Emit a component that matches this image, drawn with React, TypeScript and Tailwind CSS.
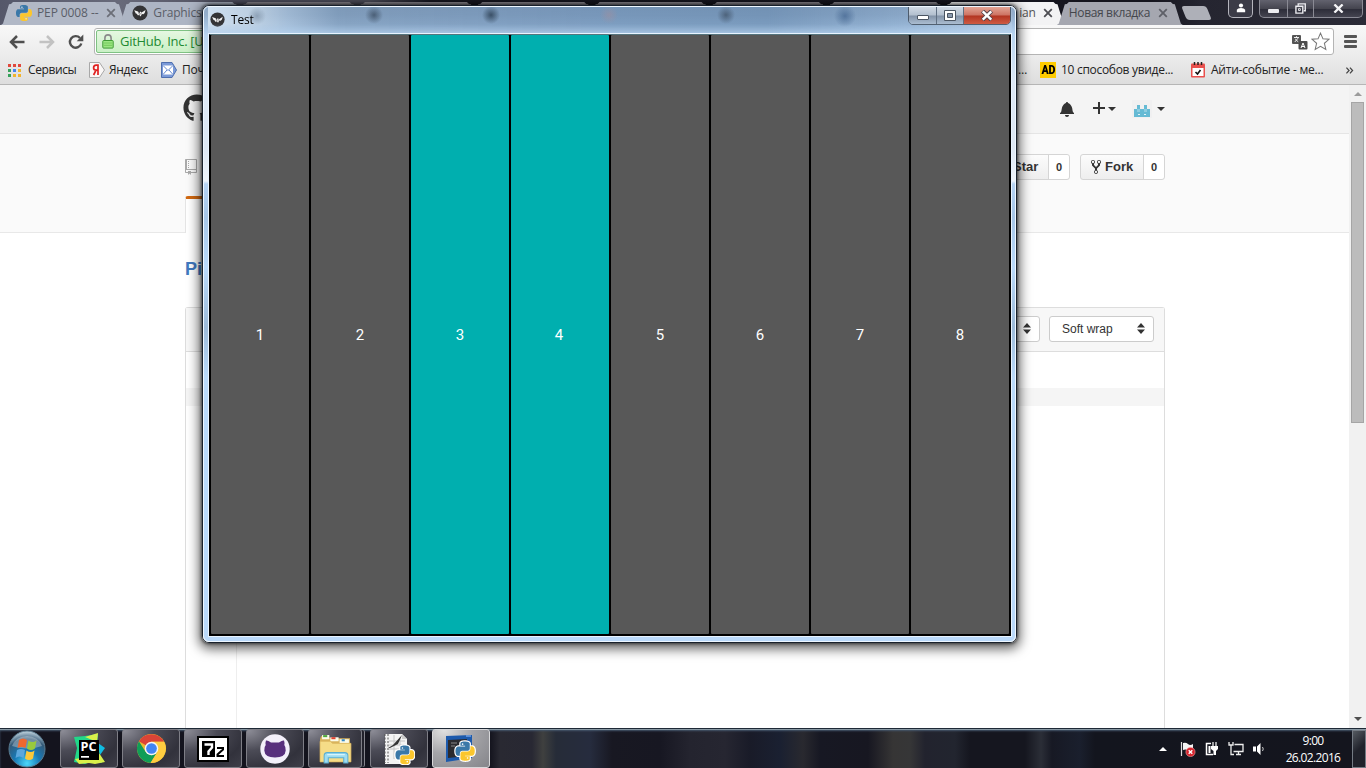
import type { ReactNode } from "react";
import { FaGithub } from "react-icons/fa";

const SNAKE =
  "M14.25.18l.9.2.73.26.59.3.45.32.34.34.25.34.16.33.1.3.04.26.02.2-.01.13V8.5l-.05.63-.13.55-.21.46-.26.38-.3.31-.33.25-.35.19-.35.14-.33.1-.3.07-.26.04-.21.02H8.77l-.69.05-.59.14-.5.22-.41.27-.33.32-.27.35-.2.36-.15.37-.1.35-.07.32-.04.27-.02.21v3.06H3.17l-.21-.03-.28-.07-.32-.12-.35-.18-.36-.26-.36-.36-.35-.46-.32-.59-.28-.73-.21-.88-.14-1.05-.05-1.23.06-1.22.16-1.04.24-.87.32-.71.36-.57.4-.44.42-.33.42-.24.4-.16.36-.1.32-.05.24-.01h.16l.06.01h8.16v-.83H6.18l-.01-2.75-.02-.37.05-.34.11-.31.17-.28.25-.26.31-.23.38-.2.44-.18.51-.15.58-.12.64-.1.71-.06.77-.04.84-.02 1.27.05z";

function PythonShape({ outline = false }: { outline?: boolean }) {
  return (
    <>
      {outline && (
        <g fill="white" stroke="white" strokeWidth="3" strokeLinejoin="round">
          <path d={SNAKE} />
          <path d={SNAKE} transform="rotate(180 12 12)" />
        </g>
      )}
      <path d={SNAKE} fill="#3a78a8" />
      <path d={SNAKE} fill="#fbc62d" transform="rotate(180 12 12)" />
      <circle cx="8.9" cy="3.3" r="1" fill="white" />
      <circle cx="15.1" cy="20.7" r="1" fill="white" />
    </>
  );
}

function KivyIcon({ className }: { className: string }) {
  return (
    <svg viewBox="0 0 16 16" className={className}>
      <circle cx="8" cy="8" r="7.6" fill="#343436" />
      <path d="M2.2 5.2 6 6.6 7.4 8.6 8.2 6.4 9.6 7.6 13.6 5 12.7 8 11.4 9.2 9.9 9 8.6 11.4 7.2 9.8 6 10.6 4.8 8.8 3.8 8.4z" fill="#f4f4f4" />
      <path d="M6.6 7.6 7.5 9.8M9.4 7.6 8.4 9.4" stroke="#555" strokeWidth=".6" />
    </svg>
  );
}

function Cross({ className }: { className: string }) {
  return (
    <svg viewBox="0 0 10 10" className={className} fill="none" stroke="currentColor" strokeWidth="1.8">
      <path d="M1.2 1.2l7.6 7.6M8.8 1.2 1.2 8.8" />
    </svg>
  );
}

const TAB =
  "flex h-[24px] w-[126px] shrink-0 -mr-[8.7px] items-center [clip-path:polygon(0_100%,2px_94%,8px_14%,10px_3px,12px_1px,114px_1px,116px_3px,118px_14%,124px_94%,126px_100%)]";

function TabStrip() {
  return (
    <div className="flex h-[25px] items-end bg-[linear-gradient(90deg,#55586a_0px,#686a7a_120px,#4b4c5b_240px,#4b4b57_370px,#16161f_430px,#15151e_1150px,#252530_1200px,#2b2b37_1366px)] pl-[1px]">
      <div className={`${TAB} bg-[#b1b8c6] text-[#5a5e68]`}>
        <svg viewBox="0 0 24 24" className="ml-[15px] size-4"><PythonShape /></svg>
        <span className="ml-[5px] w-[67px] whitespace-nowrap text-[12px] tracking-[-0.1px]">PEP 0008 --</span>
        <Cross className="ml-[2px] size-[10px] text-[#6c6f78]" />
      </div>
      <div className={`${TAB} bg-[#adb5c4] text-[#5a5e68]`}>
        <KivyIcon className="ml-[14px] size-4" />
        <span className="ml-[5px] whitespace-nowrap text-[12px] tracking-[-0.15px]">Graphics</span>
      </div>
      {[0, 1, 2, 3, 4, 5].map((i) => (
        <div key={i} className={`${TAB} bg-[#8b8890]`} />
      ))}
      <div className={`${TAB} bg-[#f3f3f4] text-[#555]`}>
        <span className="ml-[76px] w-[20px] text-right text-[12px] tracking-[-0.3px]">ian</span>
        <Cross className="ml-[7px] size-[10px] text-[#4d4d52]" />
      </div>
      <div className={`${TAB} bg-[#a5a7b0] text-[#44464c]`}>
        <span className="ml-[12px] w-[82px] whitespace-nowrap text-[12px] tracking-[-0.35px]">Новая вкладка</span>
        <Cross className="ml-[7px] size-[10px] text-[#5e6068]" />
      </div>
      <div className="mb-[5px] ml-[10px] h-[14px] w-[25px] skew-x-[22deg] rounded-[3px] bg-[#aeb0b8]" />
      <div className="ml-[19px] flex h-[25px] items-start">
        <div className="flex h-[18px] w-[25px] items-center justify-center rounded-b-[5px] border border-t-0 border-[#b5b5bd] bg-[#3b3b47]">
          <svg viewBox="0 0 12 12" className="mb-px size-[10px]" fill="#fff"><circle cx="6" cy="3" r="2.5" /><path d="M1 11V8q1-2 5-2t5 2v3z" /></svg>
        </div>
        <div className="ml-[6px] flex h-[18px] w-[104px] rounded-b-[5px] border border-t-0 border-[#8a8a94] bg-[linear-gradient(180deg,#62626e,#45454f_50%,#2c2c38_52%,#444450)]">
          <div className="flex w-[28px] items-end justify-center border-r border-[#8a8a94] pb-[4px]"><div className="h-[4px] w-[11px] rounded-[1px] bg-[#ececf0]" /></div>
          <div className="flex w-[26px] items-center justify-center border-r border-[#8a8a94]">
            <svg viewBox="0 0 12 12" className="mb-px size-[11px]" fill="none" stroke="#ececf0" strokeWidth="1.5"><path d="M3.5 3V1h7.7v7.5H9.5" /><path d="M1 3.5h7.5V11H1z" /><path d="M3.8 6.2h2v2h-2z" strokeWidth="1" /></svg>
          </div>
          <div className="flex flex-1 items-center justify-center">
            <svg viewBox="0 0 12 10" className="mb-px ml-px h-[9px] w-[11px]" stroke="#f4f4f6" strokeWidth="2.6"><path d="M1.5.5l9 9M10.5.5l-9 9" /></svg>
          </div>
        </div>
      </div>
    </div>
  );
}

function Toolbar() {
  return (
    <div className="flex h-[33px] items-center bg-[linear-gradient(180deg,#f8f8f8,#ebebeb)]">
      <svg viewBox="0 0 16 14" className="ml-[9px] h-[14px] w-[16px]" fill="none" stroke="#4f4f4f" strokeWidth="2.5"><path d="M15.5 7H2.5M8 1 2 7l6 6" /></svg>
      <svg viewBox="0 0 16 14" className="ml-[14px] h-[14px] w-[16px]" fill="none" stroke="#c2c2c2" strokeWidth="2.5"><path d="M.5 7h13M8 1l6 6-6 6" /></svg>
      <svg viewBox="0 0 16 16" className="ml-[13px] size-[16px]" fill="none" stroke="#4f4f4f" strokeWidth="2.4"><path d="M13.3 9.5A5.8 5.8 0 1 1 12 4" /><path d="M15.3.6v6.6H8.7z" fill="#4f4f4f" stroke="none" /></svg>
      <div className="ml-[10px] flex h-[27px] w-[1240px] items-center rounded-[3px] border border-[#b4b4b4] bg-white">
        <div className="ml-px flex h-[23px] w-[150px] items-center rounded-[2px] border border-[#7fc283] bg-[linear-gradient(180deg,#e5f7e1,#caf0c6)]">
          <svg viewBox="0 0 12 15" className="mb-px ml-[5px] h-[15px] w-[12px]"><path d="M2.9 7V4a3.1 3.1 0 0 1 6.2 0v3" fill="none" stroke="#8a8a8a" strokeWidth="1.6" /><rect x=".8" y="6.5" width="10.4" height="7.6" rx=".8" fill="#9be683" stroke="#3f9b35" /><path d="M2 9h8M2 11.300h8" stroke="#74ca5c" /></svg>
          <span className="ml-[6px] whitespace-nowrap text-[13px] tracking-[-0.3px] text-[#1e8a32]">GitHub, Inc. [US]</span>
        </div>
        <svg viewBox="0 0 17 16" className="ml-auto mr-[3px] h-[16px] w-[17px]">
          <rect x="1" y="1" width="9" height="9" rx="1" fill="#555" /><path d="M3 3.5h5M5.5 2.2v1.3M3.8 8 7 4.2M7.4 8 4.2 5" stroke="#fff" strokeWidth=".9" />
          <rect x="7.5" y="7" width="9" height="8.5" rx="1" fill="#4c4c4c" /><path d="M10 14l2-5 2 5M10.7 12.5h2.8" stroke="#fff" fill="none" strokeWidth="1" />
        </svg>
        <svg viewBox="0 0 20 20" className="mr-[3px] size-[19px]" fill="white" stroke="#777" strokeWidth="1.1"><path d="M10 1.2l2.6 6 6.3.5-4.8 4.2 1.5 6.5L10 15l-5.600 3.400 1.500-6.500L1.100 7.700l6.300-.5z" /></svg>
      </div>
      <div className="ml-[10px] flex w-[13px] flex-col gap-[2px]">
        <div className="h-[3px] rounded-[1px] bg-[#555]" /><div className="h-[3px] rounded-[1px] bg-[#555]" /><div className="h-[3px] rounded-[1px] bg-[#555]" />
      </div>
    </div>
  );
}

const DOTS = [
  "bg-[#e0483c]", "bg-[#e0483c]", "bg-[#e0483c]",
  "bg-[#36a15a]", "bg-[#4684ee]", "bg-[#f1b42e]",
  "bg-[#36a15a]", "bg-[#f1b42e]", "bg-[#f1b42e]",
];

function Bookmarks() {
  return (
    <div className="flex h-[27px] items-center border-b border-[#b6b6b6] bg-[linear-gradient(180deg,#ebebeb,#dedede)] pb-[2px] text-[12px] text-[#222]">
      <div className="ml-[8px] grid w-[13px] grid-cols-3 gap-[2px]">
        {DOTS.map((c, i) => <div key={i} className={`size-[3px] ${c}`} />)}
      </div>
      <span className="ml-[7px] w-[50px] whitespace-nowrap tracking-[-0.4px]">Сервисы</span>
      <svg viewBox="0 0 16 16" className="ml-[11px] size-4"><path d="M.5.5h10l5 7.500-5 7.500H.5z" fill="#faf7f6" stroke="#a8a8a8" /><path d="M9 13V3.200H7.200Q4.600 3.300 4.600 5.700T7.200 8.200H9M6.900 8.400 4.600 13" fill="none" stroke="#e02020" strokeWidth="1.7" /></svg>
      <span className="ml-[4px] w-[41px] whitespace-nowrap tracking-[-0.3px]">Яндекс</span>
      <svg viewBox="0 0 16 16" className="ml-[11px] size-4"><path d="M.5.500h10.500L15.500 8 11 15.500H.5z" fill="#7b9ad8" stroke="#4f6fae" /><path d="M2 3.500h10v9H2z" fill="white" /><path d="M2 3.500l5 5 5-5M2 12.500 6 8M12 12.500 8 8" fill="none" stroke="#6487cf" /></svg>
      <span className="ml-[5px] w-[40px] whitespace-nowrap tracking-[-0.2px]">Почта</span>
      <span className="ml-[796px] w-[8px]">…</span>
      <div className="ml-[14px] flex h-[16px] w-[16px] items-center justify-center bg-[#fc0] text-black">
        <span className="scale-x-[0.82] font-['Roboto',sans-serif] text-[13px] font-black leading-[16px] tracking-[-0.3px]">AD</span>
      </div>
      <span className="ml-[5px] w-[114px] whitespace-nowrap tracking-[-0.3px]">10 способов увиде...</span>
      <svg viewBox="0 0 16 16" className="ml-[15px] size-4"><rect x="1" y="1.500" width="14" height="14" rx="1" fill="#e9504d" /><path d="M2.500 6h11v8h-11z" fill="white" /><path d="M4.500 0v3M8 0v3M11.500 0v3" stroke="#222" strokeWidth="1.500" /><path d="M5.500 10l2 2 3-4" fill="none" stroke="#111" strokeWidth="1.600" /></svg>
      <span className="ml-[5px] w-[113px] whitespace-nowrap tracking-[-0.22px]">Айти-событие - ме...</span>
      <svg viewBox="0 0 9 8" className="ml-auto mr-[12px] h-[7px] w-[9px]" fill="none" stroke="#444" strokeWidth="1.400"><path d="M1 .8 4 4 1 7.200M5 .8 8 4 5 7.200" /></svg>
    </div>
  );
}

function Caret() {
  return <div className="size-0 border-x-[4px] border-t-[4px] border-x-transparent border-t-[#333]" />;
}

function Sorter() {
  return (
    <svg viewBox="0 0 8 11" className="h-[11px] w-[8px]" fill="#333"><path d="M4 0l4 4.600H0zM4 11 0 6.400h8z" /></svg>
  );
}

function GitHubPage() {
  return (
    <div className="flex h-full w-[1349px] flex-col bg-white font-['Liberation_Sans',sans-serif] text-[#333]">
      <div className="flex h-[49px] shrink-0 items-center border-b border-[#e5e5e5] bg-[#f4f4f4] pl-[183px]">
        <FaGithub className="mb-[2px] size-[28px] text-[#333]" />
        <svg viewBox="0 0 14 16" className="mb-px ml-[849px] h-[16px] w-[14px]" fill="#333"><path d="M14 12v1H0v-1l.73-.58c.77-.77.81-2.550 1.190-4.420C2.690 3.230 6 2 6 2c0-.55.45-1 1-1s1 .45 1 1c0 0 3.390 1.230 4.160 5 .38 1.880.42 3.660 1.190 4.420l.66.58H14zm-7 4c1.110 0 2-.89 2-2H5c0 1.110.89 2 2 2z" /></svg>
        <svg viewBox="0 0 12 12" className="mb-[2px] ml-[19px] size-[12px]" stroke="#333" strokeWidth="2"><path d="M6 0v12M0 6h12" /></svg>
        <div className="ml-[3px]"><Caret /></div>
        <svg viewBox="0 0 20 18" className="ml-[16px] h-[18px] w-[20px]"><path d="M0 0h20v18H0z" fill="#f0f0f1" /><path d="M2 9h3V5h3v4h4V5h3v4h3v8H2z" fill="#65bad4" /><path d="M5 9h3v3H5zM12 9h3v3h-3z" fill="#8fcde0" /><path d="M6 14h2v1H6zM12 14h2v1h-2z" fill="#e4f3f7" /></svg>
        <div className="ml-[5px]"><Caret /></div>
      </div>
      <div className="flex h-[99px] shrink-0 flex-col justify-between border-b border-[#e8e8e8] bg-[#fafafa] pl-[185px] pt-[20px]">
        <div className="flex h-[26px] items-center">
          <svg viewBox="0 0 12 16" className="mb-px h-[16px] w-[12px]" fill="#aaa"><path d="M4 9H3V8h1v1zm0-3H3v1h1V6zm0-2H3v1h1V4zm0-2H3v1h1V2zm8-1v12c0 .55-.45 1-1 1H6v2l-1.500-1.500L3 16v-2H1c-.55 0-1-.45-1-1V1c0-.55.45-1 1-1h10c.55 0 1 .45 1 1zm-1 10H1v2h2v-1h3v1h5v-2zm0-10H2v9h9V1z" /></svg>
          <div className="ml-[793px] flex h-[26px] w-[80px] rounded-[3px] border border-[#d5d5d5] bg-[linear-gradient(180deg,#fcfcfc,#eee)] text-[13px] font-bold leading-[24px]">
            <span className="w-[57px] pl-[22px]">Star</span>
            <span className="flex-1 rounded-r-[3px] border-l border-[#d5d5d5] bg-white text-center text-[11px]">0</span>
          </div>
          <div className="ml-[10px] flex h-[26px] w-[85px] rounded-[3px] border border-[#d5d5d5] bg-[linear-gradient(180deg,#fcfcfc,#eee)] text-[13px] font-bold leading-[24px]">
            <span className="flex w-[62px] items-center gap-[4px] pl-[10px]">
              <svg viewBox="0 0 10 16" className="h-[16px] w-[10px]" fill="#333"><path d="M8 1a1.993 1.993 0 0 0-1 3.720V6L5 8 3 6V4.720A1.993 1.993 0 0 0 2 1a1.993 1.993 0 0 0-1 3.720V6.500l3 3v1.780A1.993 1.993 0 0 0 5 15a1.993 1.993 0 0 0 1-3.720V9.500l3-3V4.720A1.993 1.993 0 0 0 8 1zM2 4.200C1.340 4.200.8 3.650.8 3c0-.65.55-1.200 1.200-1.200.65 0 1.200.55 1.200 1.200 0 .65-.55 1.200-1.200 1.200zm3 10c-.66 0-1.200-.55-1.200-1.200 0-.65.55-1.200 1.200-1.200.65 0 1.200.55 1.200 1.200 0 .65-.55 1.200-1.200 1.200zm3-10c-.66 0-1.200-.55-1.200-1.200 0-.65.55-1.200 1.200-1.200.65 0 1.200.55 1.200 1.200 0 .65-.55 1.200-1.200 1.200z" /></svg>
              Fork
            </span>
            <span className="flex-1 rounded-r-[3px] border-l border-[#d5d5d5] bg-white text-center text-[11px]">0</span>
          </div>
        </div>
        <div className="-mb-px h-[37px] w-[90px] rounded-t-[3px] border-l border-t-[3px] border-l-[#e5e5e5] border-t-[#d26911] bg-white" />
      </div>
      <div className="pl-[185px] pt-[24px] text-[18px] font-bold leading-[24px] text-[#4078c0]">Piano</div>
      <div className="ml-[185px] mt-[26px] flex w-[980px] flex-1 flex-col rounded-t-[3px] border border-b-0 border-[#ddd]">
        <div className="flex h-[44px] shrink-0 items-center justify-end border-b border-[#ddd] bg-[#f7f7f7] pb-[2px] pr-[10px] text-[12px]">
          <div className="flex h-[26px] w-[70px] items-center justify-end rounded-[3px] border border-[#ccc] bg-white pr-[8px]"><Sorter /></div>
          <div className="ml-[9px] flex h-[26px] w-[105px] items-center justify-between rounded-[3px] border border-[#ccc] bg-white pl-[12px] pr-[8px]">Soft wrap<Sorter /></div>
        </div>
        <div className="flex flex-1 bg-[linear-gradient(180deg,transparent_36px,#f5f5f5_36px,#f5f5f5_54px,transparent_54px)]">
          <div className="w-[51px] border-r border-[#eee]" />
        </div>
      </div>
    </div>
  );
}

function Scrollbar() {
  return (
    <div className="flex w-[17px] flex-col items-center bg-[#f1f1f1]">
      <div className="mt-[7px] size-0 border-x-[4px] border-b-[4px] border-x-transparent border-b-[#9b9b9b]" />
      <div className="mt-[6px] h-[321px] w-[13px] border border-[#a5a5a5] bg-[#bcbcbc]" />
      <div className="mb-[7px] mt-auto size-0 border-x-[4px] border-t-[4px] border-x-transparent border-t-[#505050]" />
    </div>
  );
}

const KEYS = [
  { n: 1, c: "bg-[#585858]" }, { n: 2, c: "bg-[#585858]" }, { n: 3, c: "bg-[#00afaf]" }, { n: 4, c: "bg-[#00afaf] pr-[2px]" },
  { n: 5, c: "bg-[#585858]" }, { n: 6, c: "bg-[#585858]" }, { n: 7, c: "bg-[#585858]" }, { n: 8, c: "bg-[#585858]" },
];

function KivyWindow() {
  return (
    <div className="absolute left-[202px] top-[5px] h-[638px] w-[815px] rounded-[7px] border border-[#18212c] shadow-[0_3px_12px_3px_rgba(0,0,0,0.6),0_0_3px_1px_rgba(0,0,0,0.5)]">
      <div className="flex h-full w-full flex-col rounded-[6px] border border-[#eef7ff] bg-[linear-gradient(180deg,#8fa9c6_0px,#94afcd_8px,#a9c6e4_20px,#b9d5f0_28px,#dce8f5_75px,#dde8f4_140px,#eef4fb_174px,#b5d3f3_177px,#a6c6e8_210px,#badafa_260px,#9dbbd9_320px,#badafa_370px,#bad9fa_634px)] pl-[4px] pr-[3px]">
        <div className="flex h-[26px] shrink-0 bg-[radial-gradient(circle_at_49px_9px,#7f93a8bb_0,transparent_9px),radial-gradient(circle_at_166px_8px,#43566cdd_0,transparent_9px),radial-gradient(circle_at_283px_8px,#304459dd_0,transparent_9px),radial-gradient(circle_at_401px_8px,#a08f9e88_0,transparent_9px),radial-gradient(circle_at_518px_8px,#43566ccc_0,transparent_9px),radial-gradient(circle_at_637px_9px,#446690bb_0,transparent_11px),linear-gradient(90deg,#cfe0f0_0,#c5d6e6cc_45px,#a8bfd788_80px,#6f8cac88_130px,#6587ad99_380px,#5f82a899_560px,#7294b955_690px,#ffffff22_100%)] [mask-image:linear-gradient(180deg,#000_65%,#0005)]">
          <KivyIcon className="ml-[2px] mt-[5px] size-[15px]" />
          <span className="ml-[6px] text-[12px] leading-[26px] tracking-[-0.2px] text-black">Test</span>
          <div className="ml-auto mr-px -mt-px flex h-[19px] w-[103px] overflow-hidden rounded-b-[5px] border border-[#4d5b6c]">
            <div className="flex w-[28px] items-center justify-center border-r border-[#5f6f82] bg-[linear-gradient(180deg,#d0d9e4,#b2bfce_48%,#8292a7_52%,#abbdd1)] pt-[4px]"><div className="h-[5px] w-[12px] rounded-[1px] border border-[#4b5562] bg-white" /></div>
            <div className="flex w-[27px] items-center justify-center border-r border-[#5f6f82] bg-[linear-gradient(180deg,#d0d9e4,#b2bfce_48%,#8292a7_52%,#abbdd1)]">
              <svg viewBox="0 0 12 11" className="h-[11px] w-[12px]"><path d="M.5.500h11v10H.5z" fill="#fff" stroke="#4b5562" /><path d="M3.500 3.500h5v4h-5z" fill="#8b9aae" stroke="#4b5562" /></svg>
            </div>
            <div className="flex flex-1 items-center justify-center bg-[linear-gradient(180deg,#e3a595,#cd7262_48%,#b23421_52%,#cf5b43)]">
              <svg viewBox="0 0 14 11" className="h-[11px] w-[14px]"><path d="M2.500 1l9 9M11.500 1l-9 9" stroke="#54434b" strokeWidth="4.200" /><path d="M2.700 1.300l8.600 8.400M11.300 1.300l-8.600 8.400" stroke="#fff" strokeWidth="2.400" /></svg>
            </div>
          </div>
        </div>
        <div className="h-[604px] border border-[#e9f4ff]">
          <div className="flex h-full border border-black border-t-[#55757e]">
            {KEYS.map((k) => (
              <div key={k.n} className="flex w-[100px] bg-black px-px pb-px">
                <div className={`flex flex-1 items-center justify-center rounded-[1px] pt-px font-['Roboto',sans-serif] text-[15px] text-white ${k.c}`}>{k.n}</div>
              </div>
            ))}
          </div>
        </div>
      </div>
    </div>
  );
}

function TaskButton({ children, active = false, narrow = false }: { children: ReactNode; active?: boolean; narrow?: boolean }) {
  return (
    <div
      className={`flex h-[39px] items-center justify-center rounded-[3px] border ${narrow ? "mr-[8px] w-[54px] shadow-[3px_0_0_-1px_#22222c,4px_0_0_-1px_#85858d]" : "mr-[4px] w-[58px]"} ${
        active
          ? "border-[#d8d8da] bg-[radial-gradient(ellipse_at_20%_0%,#e1e1e1,#a5a5a9_45%,#85858a_100%)]"
          : "border-[#7e7e86] bg-[radial-gradient(ellipse_at_0%_0%,#90909a,#4b4b56_40%,#32323c_75%,#3e3e48)]"
      }`}
    >
      {children}
    </div>
  );
}

function Taskbar() {
  return (
    <div className="flex h-[40px] items-start border-t border-[#1e2936] bg-[linear-gradient(90deg,#14141e_0,#14141e_490px,#292932_500px,#282833_532px,#3f403f_543px,#262c38_556px,#262c3e_590px,#181822_612px,#171722_660px,#24242f_690px,#262631_725px,#191b28_750px,#1a2031_780px,#29292f_803px,#171823_820px,#171721_868px,#363535_893px,#363637_910px,#22232e_925px,#22252f_955px,#15161f_970px,#15161f_1025px,#2b2e37_1041px,#171924_1052px,#1a1f2d_1080px,#13151e_1095px,#14151e_100%)] shadow-[inset_0_1px_0_#8797a2,inset_0_2px_2px_#44566a]">
      <svg viewBox="0 0 38 38" className="ml-[8px] mr-[14px] mt-px size-[38px] shrink-0">
        <defs>
          <radialGradient id="orb" cx=".5" cy=".9" r=".9"><stop offset="0" stopColor="#4cd8fa" /><stop offset=".4" stopColor="#1879b5" /><stop offset=".75" stopColor="#345a78" /><stop offset="1" stopColor="#c8dae4" /></radialGradient>
        </defs>
        <circle cx="19" cy="19" r="18" fill="url(#orb)" stroke="#5a7c91" />
        <path d="M4 16a15.500 13.500 0 0 1 30 0q-15 5-30 0z" fill="#fff" opacity=".3" />
        <path d="M11 10q4-3 8 0l-1.500 8q-4-2-8 0z" fill="#ed6830" />
        <path d="M20.500 10.500q4 3 8 0L27 18.500q-4 3-8 0z" fill="#98c93d" />
        <path d="M9 20q4-2 8 0l-1.500 8q-4-3-8 0z" fill="#5ba7dd" />
        <path d="M18.500 20.500q4 3 8 0L25 28.500q-4 3-8 0z" fill="#fbc83a" />
      </svg>
      <TaskButton>
        <svg viewBox="0 0 32 32" className="size-[32px]">
          <path d="M1 4 12 3 25 1l-1 10 5 4-3 6 3 9-9-2-8 3L1 29 4 15z" fill="#21d789" /><path d="M12 4 25 0l-1 9zM2 26l6-1 18-5 6 9-10 2-6-1-10 1z" fill="#d9f04a" /><path d="M25 10l7 5-5 7z" fill="#10bde2" />
          <path d="M6 7h20v20H6z" fill="#000" /><path d="M8 23h8v1.700H8z" fill="#fff" />
          <text x="7.500" y="17.500" fill="#fff" fontSize="12.500" fontWeight="700" fontFamily="Open Sans, sans-serif" textLength="16" lengthAdjust="spacingAndGlyphs">PC</text>
        </svg>
      </TaskButton>
      <TaskButton>
        <svg viewBox="0 0 32 32" className="size-[31px]">
          <circle cx="16" cy="16" r="15" fill="#e7b931" /><path d="M16 16 3 8.500A15 15 0 0 1 29 9H16z" fill="#db4437" /><path d="M3 8.500A15 15 0 0 0 15 31l7-11.500-6 3.500-6-3.500z" fill="#109d58" /><path d="M16 9h13a15 15 0 0 1-14 22l7-11.500z" fill="#ffcd40" />
          <circle cx="16" cy="16" r="7" fill="#f5f5f5" /><circle cx="16" cy="16" r="5.500" fill="#4285f4" />
        </svg>
      </TaskButton>
      <TaskButton>
        <svg viewBox="0 0 32 26" className="h-[26px] w-[32px]">
          <path d="M1 1h30v24H1z" fill="#fff" stroke="#000" strokeWidth="2" /><path d="M5 5h13v16H5z" fill="#000" />
          <path d="M7.500 8.500h7.500v3l-3.500 4V19" fill="none" stroke="#fff" strokeWidth="2.400" /><path d="M20 12h6v1.500l-5.500 5V20h6.500" fill="none" stroke="#000" strokeWidth="2" />
        </svg>
      </TaskButton>
      <TaskButton>
        <svg viewBox="0 0 32 32" className="size-[32px]"><circle cx="16" cy="16" r="14.700" fill="#f3f0fa" /><path d="M7 7.500q1.500-.5 5 2h8q3.500-2.500 5-2 .8 2 .3 4.500 1.700 2 1.400 5.500-.4 7-10.700 7t-10.700-7Q5 14 6.700 12q-.5-2.500.3-4.500z" fill="#58307d" /></svg>
      </TaskButton>
      <TaskButton narrow>
        <svg viewBox="0 0 32 32" className="size-[33px]">
          <path d="M1 7l1-3h7l2 2h19v23H1z" fill="#d9b45c" /><path d="M3 3h7v4H3zM11 5h8v4h-8zM20 7h9v4h-9z" fill="#fbfbe9" /><path d="M4 3h4v2H4z" fill="#4da83b" /><path d="M12 5h4v2h-4z" fill="#dd4231" /><path d="M22 7h3v2h-3z" fill="#3589c6" />
          <path d="M1 9h10l2 2h18v18H1z" fill="#f5dc87" stroke="#d9b45c" strokeWidth=".7" /><path d="M5 30v-7q0-3 3-3h17q3 0 3 3v7h-4v-5H9v5z" fill="#9ddcf2" stroke="#5aaed3" /><path d="M8 22h17" stroke="#e2f9ff" />
        </svg>
      </TaskButton>
      <TaskButton>
        <svg viewBox="0 0 32 32" className="size-[32px]">
          <path d="M2 1h17l5 5v25H2z" fill="#f3f3f3" /><path d="M2 1v29M5 1v29" stroke="#555" strokeWidth="1" strokeDasharray="2 1.500" /><path d="M6 8h16M6 12h16M6 16h14M11 2v24M17 4v20" stroke="#c4c4c4" /><path d="M19 1v5h5z" fill="#ccc" /><path d="M5 15 10 12 19 2l-4 9-4 2-4 2z" fill="#333" />
          <g transform="translate(12.500 12.500) scale(.78)"><PythonShape outline /></g>
        </svg>
      </TaskButton>
      <TaskButton active>
        <svg viewBox="0 0 32 32" className="size-[32px]">
          <path d="M1 3 27 2v23L1 29z" fill="#1d5aac" /><path d="M3 7l19-1v17L3 25z" fill="#2b2b2f" /><path d="M6 10h6M6 13h4" stroke="#888" /><path d="M21 3h5" stroke="#9bc4ff" />
          <g transform="translate(10.500 8.500) scale(.8)"><PythonShape outline /></g>
        </svg>
      </TaskButton>
      <div className="ml-auto flex h-[39px] items-center">
        <div className="mr-[13px] size-0 border-x-[4px] border-b-[4px] border-x-transparent border-b-white" />
        <svg viewBox="0 0 16 16" className="mr-[8px] size-4"><path d="M1.500 1v14" stroke="#ddd" strokeWidth="1.200" /><path d="M3 2q3-1 5 1t5 0v7q-3 1-5-.5T3 9z" fill="#f5f5f5" /><circle cx="10.500" cy="11" r="4.600" fill="#d6232c" stroke="#f4aaaa" strokeWidth=".6" /><path d="M8.700 9.200l3.600 3.600M12.300 9.200l-3.600 3.600" stroke="#fff" strokeWidth="1.400" /></svg>
        <svg viewBox="0 0 16 16" className="mr-[8px] size-4"><path d="M7 2.500H2.500v11H9" fill="none" stroke="#fff" strokeWidth="1.500" /><path d="M4.500 5h2v7h-2z" fill="#fff" /><path d="M9 1v4M12 1v4" stroke="#fff" strokeWidth="1.200" /><path d="M7 5h7v3l-2 2v4H9.500v-4L7 8z" fill="#fff" /></svg>
        <svg viewBox="0 0 16 16" className="mr-[8px] size-4" fill="none" stroke="#eee" strokeWidth="1.300"><path d="M6.500 3.500h8.500v7H5.500M8 13.500h5M10.500 11v3" /><path d="M1 1v3h4V1M3 4v9.500h3" /></svg>
        <svg viewBox="0 0 16 16" className="mr-[16px] size-4"><path d="M1 5.500h3v5H1zM5 5.500 8.500 2v12L5 10.500z" fill="#fff" /><path d="M10.500 6q1.500 2 0 4" fill="none" stroke="#ccc" /></svg>
        <div className="flex w-[58px] flex-col items-center whitespace-nowrap text-[12px] leading-[17px] tracking-[-0.65px] text-white"><span>9:00</span><span>26.02.2016</span></div>
        <div className="ml-[10px] mt-px h-[38px] w-[14px] border border-[#747b84] bg-[linear-gradient(135deg,#555a61,#20222b_50%)]" />
      </div>
    </div>
  );
}

export default function App() {
  return (
    <div className="relative flex h-[768px] w-[1366px] flex-col overflow-hidden font-['Open_Sans','Noto_Sans',sans-serif]">
      <TabStrip />
      <Toolbar />
      <Bookmarks />
      <div className="flex min-h-0 flex-1">
        <GitHubPage />
        <Scrollbar />
      </div>
      <Taskbar />
      <KivyWindow />
    </div>
  );
}
